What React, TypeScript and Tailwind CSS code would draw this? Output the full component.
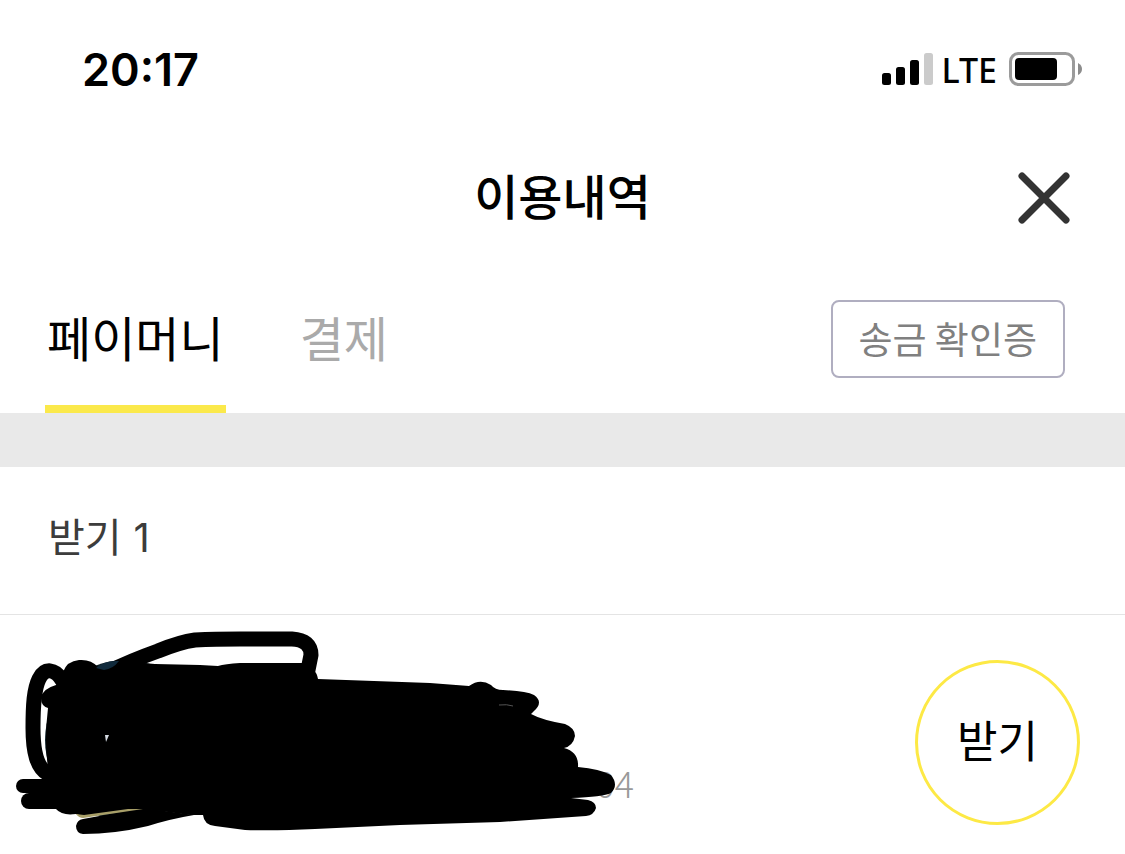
import { useState } from 'react';

const tabs = [
    { id: 'money', label: '페이머니' },
    { id: 'payment', label: '결제' },
];

function StatusBar() {
    return (
        <div className="flex h-[138px] items-center justify-between pl-[82px] pr-[43px]">
            <span className="font-['Inter',sans-serif] text-[45px] leading-none font-semibold">20:17</span>
            <div className="flex items-center gap-2">
                <svg width="51" height="32" viewBox="0 0 51 32" aria-hidden="true">
                    <rect x="0" y="20" width="9" height="12" rx="2.5" />
                    <rect x="14" y="14" width="9" height="18" rx="2.5" />
                    <rect x="28" y="7" width="9" height="25" rx="2.5" />
                    <rect x="42" y="0" width="9" height="32" rx="2.5" fill="#cbcbcb" />
                </svg>
                <span className="pt-[2px] pr-1 font-['Noto_Sans',sans-serif] text-[34px] leading-none font-medium">LTE</span>
                <svg width="73" height="34" viewBox="0 0 73 34" aria-hidden="true">
                    <rect x="1.5" y="1.5" width="63" height="31" rx="8" fill="none" stroke="#9b9b9b" strokeWidth="3" />
                    <rect x="6" y="6" width="42" height="22" rx="4" />
                    <path d="M69 11 Q73 13 73 17 Q73 21 69 23 Z" fill="#8c8c8c" />
                </svg>
            </div>
        </div>
    );
}

function Scribble() {
    return (
        <svg
            className="absolute top-0 left-0"
            width="660"
            height="239"
            viewBox="0 615 660 239"
            aria-hidden="true"
        >
            <g fill="none" stroke="#000" strokeLinecap="round" strokeLinejoin="round">
                <path d="M62 680 C55 669 45 667 39 679 C34 689 33 705 33 728 C33 752 37 768 48 774" strokeWidth="15" />
                <path d="M108 672 Q130 661 158 651 Q180 642 195 640 Q215 639 240 639 H292 Q311 640 311 655 L308 670" strokeWidth="15" />
                <path d="M23 786 H60" strokeWidth="14" />
                <path d="M29 801 H80" strokeWidth="16" />
            </g>
            <path d="M56 685 L63 672 Q67 661 79 660 Q91 659 98 667 Q104 672 110 671 L124 666 Q137 662 155 664 L200 665 L218 666 Q225 664 240 663 L302 663 Q316 667 318 679 L430 683 L469 686 Q480 678 491 685 Q495 690 503 690 Q526 691 534 695 Q544 702 534 711 L531 714 Q542 720 565 724 Q575 728 575 736 Q573 746 564 748 Q579 752 578 767 Q600 769 611 775 Q619 785 611 793 Q603 797 571 798 L588 800 Q596 802 596 808 Q594 815 586 816 L500 822 L400 825 L315 829 Q275 831 245 830 L215 826 Q204 825 203 815 H190 L146 809 Q115 812 82 816 L76 814 Q62 816 56 809 L29 809 L38 782 L44 777 L48 768 Q44 740 48 708 Q41 706 41 698 Q42 689 56 685 Z" />
            <path d="M83 819 L143 808 L194 815 Q170 819 148 826 Q115 834 83 834 Q76 833 76 826 Q77 820 83 819 Z" />
            <path d="M96 668 Q105 660 119 661 Q113 669 104 670 Z" fill="#102a3c" />
            <path d="M76 814 Q79 818 83 818 L143 809 L128 809 L84 815 Z" fill="#a89f68" />
            <path d="M105 735 L109 735 L106 742 Z" fill="#d5dbe3" />
            <path d="M499 705 Q507 704 513 706" fill="none" stroke="#555" />
        </svg>
    );
}

export default function App() {
    const [active, setActive] = useState('money');

    return (
        <div className="min-h-screen bg-white font-['Noto_Sans_CJK_KR',sans-serif] text-black">
            <StatusBar />

            <header className="grid h-[120px] grid-cols-[1fr_auto_1fr] items-center px-[55px]">
                <h1 className="col-start-2 pb-2 text-[48px] leading-none font-medium">이용내역</h1>
                <button type="button" aria-label="닫기" className="justify-self-end">
                    <svg width="52" height="52" viewBox="0 0 52 52" stroke="#333" strokeWidth="7" strokeLinecap="round">
                        <path d="M4 4 L48 48 M48 4 L4 48" />
                    </svg>
                </button>
            </header>

            <div className="flex h-[155px] items-stretch justify-between pr-[60px] pl-[45px]">
                <nav className="flex gap-[72px]">
                    {tabs.map(tab => (
                        <button
                            key={tab.id}
                            type="button"
                            onClick={() => setActive(tab.id)}
                            className={`border-b-8 px-[2px] pt-2 text-[48px] leading-none ${
                                active === tab.id ? 'border-[#fbe94b] text-black' : 'border-transparent text-[#aaaaaa]'
                            }`}
                        >
                            {tab.label}
                        </button>
                    ))}
                </nav>
                <button
                    type="button"
                    className="mt-[42px] h-[78px] rounded-lg border-2 border-[#b0aec0] px-[26px] pb-[2px] text-[37px] leading-none text-[#808080]"
                >
                    송금 확인증
                </button>
            </div>

            <div className="h-[54px] bg-[#e9e9e9]" />

            <section>
                <div className="flex h-[148px] items-center border-b border-[#e4e4e4] px-12 pb-2">
                    <h2 className="flex items-baseline gap-3 text-[40px] leading-none text-[#3c3c3c]">
                        받기 <span className="font-['Inter',sans-serif]">1</span>
                    </h2>
                </div>
                <div className="relative flex items-start justify-between px-[45px] pt-[45px] pb-[29px]">
                    <div className="flex gap-6">
                        <div className="size-[160px] rounded-full bg-[#0c1d25]" />
                        <p className="w-[405px] pt-[102px] text-right text-[36px] leading-10 font-light text-[#999999]">04</p>
                    </div>
                    <Scribble />
                    <button
                        type="button"
                        className="size-[165px] rounded-full border-[3px] border-[#fde945] pb-2 text-[44px] leading-none"
                    >
                        받기
                    </button>
                </div>
            </section>
        </div>
    );
}
